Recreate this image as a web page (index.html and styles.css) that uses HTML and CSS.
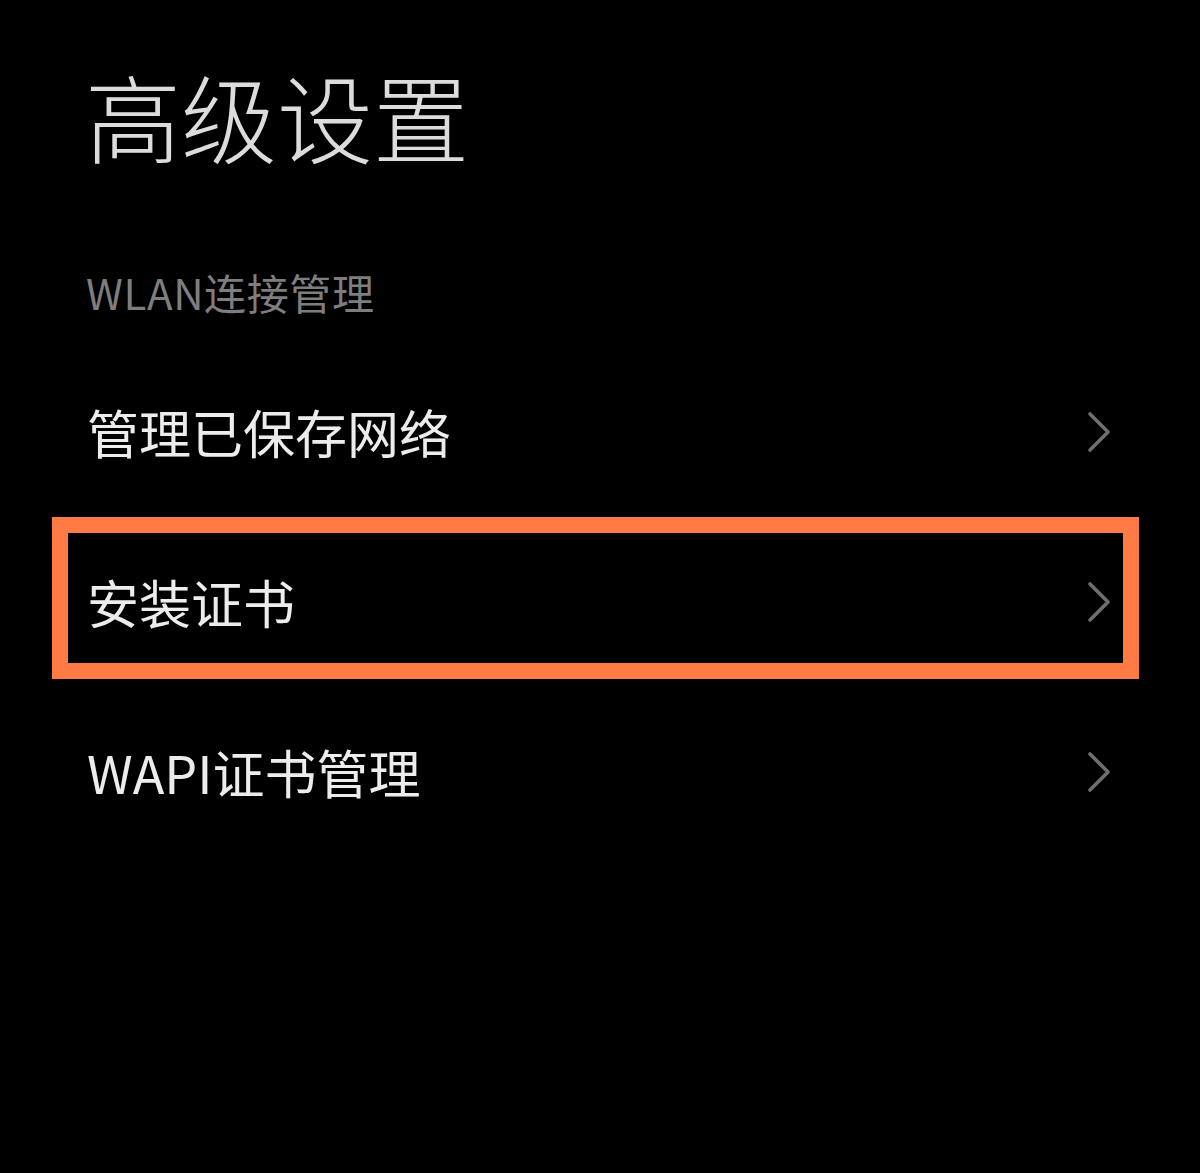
FILE: index.html
```html
<!DOCTYPE html>
<html lang="zh-CN">
<head>
<meta charset="utf-8">
<title>高级设置</title>
<link rel="stylesheet" href="styles.css">
</head>
<body>
<div class="page">
  <h1 class="title">高级设置</h1>
  <div class="section-label">WLAN连接管理</div>
  <ul class="list">
    <li class="row">
      <span class="row-text">管理已保存网络</span>
      <svg class="chev" viewBox="0 0 24 42" width="24" height="42"><path d="M3 3 L21 21 L3 39" fill="none" stroke="#6f6f6f" stroke-width="3.6" stroke-linecap="round" stroke-linejoin="round"/></svg>
    </li>
    <li class="row highlighted">
      <span class="row-text">安装证书</span>
      <svg class="chev" viewBox="0 0 24 42" width="24" height="42"><path d="M3 3 L21 21 L3 39" fill="none" stroke="#6f6f6f" stroke-width="3.6" stroke-linecap="round" stroke-linejoin="round"/></svg>
    </li>
    <li class="row">
      <span class="row-text">WAPI证书管理</span>
      <svg class="chev" viewBox="0 0 24 42" width="24" height="42"><path d="M3 3 L21 21 L3 39" fill="none" stroke="#6f6f6f" stroke-width="3.6" stroke-linecap="round" stroke-linejoin="round"/></svg>
    </li>
  </ul>
</div>
</body>
</html>
```

FILE: styles.css
```css
html, body {
  margin: 0;
  padding: 0;
  background: #000;
}
body {
  width: 1200px;
  height: 1173px;
  overflow: hidden;
  font-family: "Noto Sans CJK SC", "Noto Sans", sans-serif;
}
.page {
  padding: 55px 0 0 52px;
  width: 1087px;
}
.title {
  margin: 0;
  padding-left: 33px;
  font-size: 96px;
  line-height: 120px;
  font-weight: 300;
  color: #dcdcdc;
}
.section-label {
  margin-top: 87px;
  padding-left: 34px;
  height: 60px;
  line-height: 60px;
  font-size: 42px;
  color: #7e7e7e;
  font-weight: 400;
  letter-spacing: 0.6px;
}
.list {
  list-style: none;
  margin: 25px 0 0 0;
  padding: 0;
}
.row {
  position: relative;
  height: 170px;
  display: flex;
  align-items: center;
  justify-content: space-between;
  padding: 0 28px 0 35px;
  box-sizing: border-box;
}
.row-text {
  font-size: 52px;
  font-weight: 400;
  color: #ececec;
  line-height: 60px;
}
.chev {
  display: block;
}
.highlighted::after {
  content: "";
  position: absolute;
  left: 0;
  right: 0;
  top: 0;
  bottom: 8px;
  border: 16px solid #ff7a45;
  pointer-events: none;
}
```
